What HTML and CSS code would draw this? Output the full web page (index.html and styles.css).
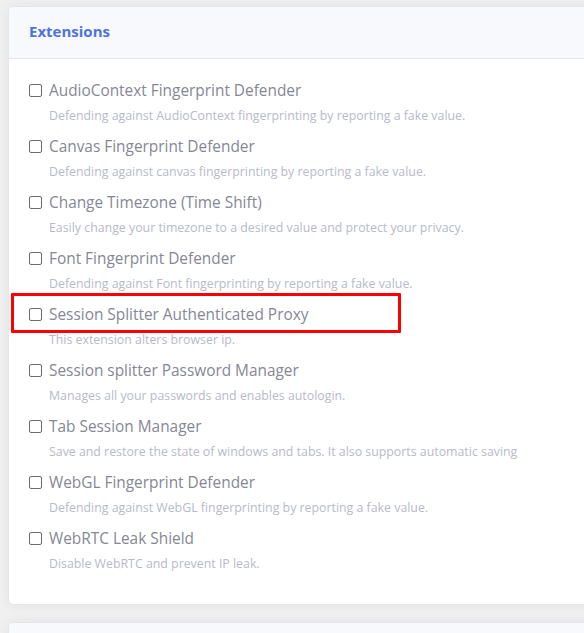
FILE: index.html
```html
<!DOCTYPE html>
<html>
<head>
<meta charset="utf-8">
<link rel="stylesheet" href="styles.css">
</head>
<body>
<div class="page">
  <div class="card">
    <div class="card-header"><h6 class="card-title">Extensions</h6></div>
    <div class="card-body">
      <div class="ext"><label class="ext-label"><span class="box"></span><span class="ext-name">AudioContext Fingerprint Defender</span></label><div class="ext-desc">Defending against AudioContext fingerprinting by reporting a fake value.</div></div>
      <div class="ext"><label class="ext-label"><span class="box"></span><span class="ext-name">Canvas Fingerprint Defender</span></label><div class="ext-desc">Defending against canvas fingerprinting by reporting a fake value.</div></div>
      <div class="ext"><label class="ext-label"><span class="box"></span><span class="ext-name">Change Timezone (Time Shift)</span></label><div class="ext-desc">Easily change your timezone to a desired value and protect your privacy.</div></div>
      <div class="ext"><label class="ext-label"><span class="box"></span><span class="ext-name">Font Fingerprint Defender</span></label><div class="ext-desc">Defending against Font fingerprinting by reporting a fake value.</div></div>
      <div class="ext"><label class="ext-label"><span class="box"></span><span class="ext-name">Session Splitter Authenticated Proxy</span><span class="highlight"></span></label><div class="ext-desc">This extension alters browser ip.</div></div>
      <div class="ext"><label class="ext-label"><span class="box"></span><span class="ext-name">Session splitter Password Manager</span></label><div class="ext-desc">Manages all your passwords and enables autologin.</div></div>
      <div class="ext"><label class="ext-label"><span class="box"></span><span class="ext-name">Tab Session Manager</span></label><div class="ext-desc">Save and restore the state of windows and tabs. It also supports automatic saving</div></div>
      <div class="ext"><label class="ext-label"><span class="box"></span><span class="ext-name">WebGL Fingerprint Defender</span></label><div class="ext-desc">Defending against WebGL fingerprinting by reporting a fake value.</div></div>
      <div class="ext"><label class="ext-label"><span class="box"></span><span class="ext-name">WebRTC Leak Shield</span></label><div class="ext-desc">Disable WebRTC and prevent IP leak.</div></div>
    </div>
  </div>
  <div class="card card-next">
    <div class="card-header"></div>
  </div>
</div>
</body>
</html>
```
FILE: styles.css
```css
html, body {
  margin: 0;
  padding: 0;
  background: #f0f0f1;
  font-family: "Open Sans", "Noto Sans", sans-serif;
  overflow: hidden;
}
.page {
  padding: 6px 0 0 8px;
  width: 600px;
}
.card {
  background: #fff;
  border: 1px solid #e3e6f0;
  border-radius: 5px;
  box-shadow: 0 0 12px rgba(0,0,0,0.06);
  overflow: hidden;
}
.card-header {
  background: #f8f9fc;
  border-bottom: 1px solid #e3e6f0;
  height: 51px;
  display: flex;
  align-items: center;
  padding: 0 20px;
}
.card-title {
  margin: 0;
  font-size: 15px;
  font-weight: 700;
  color: #4e73df;
  line-height: 20px;
  padding-bottom: 4px;
}
.card-body {
  padding: 20px 20px 20px 20px;
}
.ext {
  margin-bottom: 9px;
}
.ext:last-child {
  margin-bottom: 10px;
}
.ext-label {
  position: relative;
  display: flex;
  align-items: center;
  height: 22px;
  padding-bottom: 2px;
  color: #858796;
  font-size: 15.4px;
}
.box {
  width: 11px;
  height: 11px;
  border: 1px solid #6b6b6b;
  border-radius: 2px;
  background: #fff;
  margin-right: 7px;
  flex-shrink: 0;
}
.ext-name {
  white-space: nowrap;
}
.ext-desc {
  margin-top: 3px;
  padding-left: 20px;
  font-size: 12.35px;
  line-height: 20px;
  color: #b7b9cc;
  white-space: nowrap;
}
.highlight {
  position: absolute;
  left: -18px;
  top: -10px;
  width: 384px;
  height: 34px;
  border: 3px solid #f00;
  border-radius: 1px;
}
.card-next {
  margin-top: 17px;
  height: 60px;
}
```
